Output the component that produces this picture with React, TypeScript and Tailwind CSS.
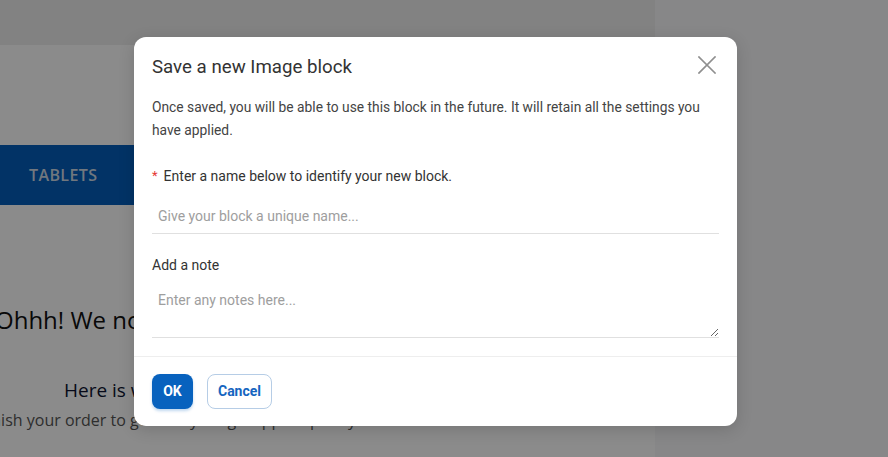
import { useState } from "react";

function CloseIcon() {
    return (
        <svg width="18" height="18" viewBox="0 0 18 18" fill="none" stroke="#8f8f8f" strokeWidth="1.7" strokeLinecap="square">
            <path d="M1 1 L17 17 M17 1 L1 17" />
        </svg>
    );
}

function BackgroundPage() {
    return (
        <div className="flex h-[457px] w-full overflow-hidden bg-[#f8f8f9]" style={{ fontFamily: "'Open Sans', sans-serif" }}>
            <div className="flex w-[655px] shrink-0 flex-col overflow-hidden bg-white">
                <div className="h-[45px] bg-[#efefef]" />
                <div className="h-[100px]" />
                <nav className="flex h-[60px] w-[300px] items-center bg-[#045fbb] pl-[29px]">
                    <span className="text-[16px] font-semibold tracking-wide text-[#cfdbe8]">TABLETS</span>
                </nav>
                {/* empty cart message, mostly hidden behind the dialog */}
                <div className="mt-[98px] flex flex-col whitespace-nowrap">
                    <h2 className="-ml-[5px] text-[24px] leading-[34px] text-[#111]">Ohhh! We noticed your cart is empty</h2>
                    <p className="ml-[64px] mt-[40px] text-[19px] leading-[26px] text-[#0d1430]">Here is what you can do next</p>
                    <p className="-ml-[21px] mt-[5px] text-[16px] leading-[24px] text-[#555]">Finish your order to get everything shipped quickly</p>
                </div>
            </div>
            <div className="flex-1" />
        </div>
    );
}

export default function App() {
    const [name, setName] = useState("");
    const [note, setNote] = useState("");

    return (
        <div className="relative h-[457px] w-[888px] overflow-hidden">
            <BackgroundPage />

            {/* Modal overlay */}
            <div className="absolute inset-0 bg-black/[0.455] pl-[134px] pt-[37px]" style={{ fontFamily: "Roboto, 'Liberation Sans', sans-serif" }}>
                <div className="flex w-[603px] flex-col rounded-[12px] bg-white shadow-[0_4px_16px_rgba(0,0,0,0.15)]">
                    <div className="flex items-start justify-between pl-[18px] pr-[21px] pt-[16px]">
                        <h3 className="text-[18.7px] font-normal leading-[28px] text-[#333]">Save a new Image block</h3>
                        <button className="mt-[3px]">
                            <CloseIcon />
                        </button>
                    </div>

                    <div className="px-[18px] pb-[18px]">
                        <p className="mt-[15px] text-[13.8px] leading-[23px] text-[#444]">
                            Once saved, you will be able to use this block in the future. It will retain all the settings you have applied.
                        </p>

                        <label className="mt-[22px] flex items-center text-[14px] leading-[24px] text-[#333]">
                            <span className="mr-[6px] text-[13px] text-[#e53935]">*</span>
                            Enter a name below to identify your new block.
                        </label>
                        <input
                            type="text"
                            value={name}
                            onChange={(e) => setName(e.target.value)}
                            placeholder="Give your block a unique name..."
                            className="mt-[10px] h-[36px] w-full border-b border-[#e0e0e0] px-[6px] text-[14px] text-[#333] outline-none placeholder:text-[#9e9e9e]"
                        />

                        <label className="mt-[19px] block text-[14px] leading-[24px] text-[#333]">Add a note</label>
                        <textarea
                            value={note}
                            onChange={(e) => setNote(e.target.value)}
                            placeholder="Enter any notes here..."
                            className="mt-[8px] block h-[53px] w-full resize-y border-b border-[#e0e0e0] px-[6px] pt-[5px] text-[14px] leading-[20px] text-[#333] outline-none placeholder:text-[#9e9e9e]"
                        />
                    </div>

                    <div className="flex gap-[14px] border-t border-[#eeeeee] px-[18px] pb-[17px] pt-[17px]">
                        <button className="h-[35px] w-[41px] rounded-[8px] bg-[#0862be] text-[14px] font-bold text-white shadow-[0_2px_3px_rgba(8,98,190,0.25)]">
                            OK
                        </button>
                        <button className="h-[35px] w-[65px] rounded-[8px] border border-[#b6cde6] bg-white text-[14px] font-bold text-[#1565c0]">
                            Cancel
                        </button>
                    </div>
                </div>
            </div>
        </div>
    );
}
